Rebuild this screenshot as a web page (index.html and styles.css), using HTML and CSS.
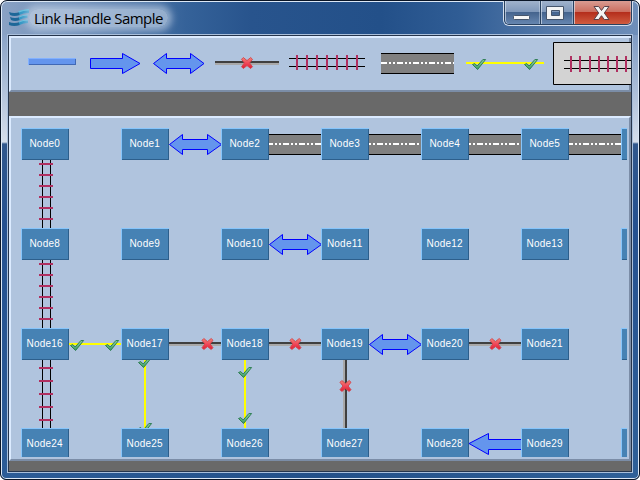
FILE: index.html
```
<!DOCTYPE html>
<html lang="en">
<head>
<meta charset="utf-8">
<title>Link Handle Sample</title>
<link rel="stylesheet" href="styles.css">
</head>
<body>
<svg class="defs" width="0" height="0" aria-hidden="true">
  <defs>
    <linearGradient id="green" x1="0" y1="0" x2="0" y2="1"><stop offset="0" stop-color="#8fd0a0"/><stop offset="1" stop-color="#3b9a66"/></linearGradient>
    <linearGradient id="red" x1="0" y1="0" x2="0" y2="1"><stop offset="0" stop-color="#ee8878"/><stop offset=".5" stop-color="#f0485a"/><stop offset="1" stop-color="#dd1c30"/></linearGradient>
    <symbol id="check" viewBox="0 0 14 11" overflow="visible"><path d="M.5 5.500 2.800 4.600 5.200 7 10.800.6 13.600.5 5.600 10.500Z" fill="url(#green)" stroke="#23764a" stroke-width=".9"/></symbol>
    <symbol id="cross" viewBox="0 0 12 12" overflow="visible"><path d="M2.300.5 6 3.600 9.700.5 11.500 2.300 8.600 6 11.500 9.700 9.700 11.500 6 8.600 2.300 11.500.5 9.700 3.400 6 .5 2.300Z" fill="url(#red)" stroke="#d4424a" stroke-width=".9"/></symbol>
    <g id="double"><path d="M.5 10.500 13.500.5V5.500H38.500V.5L52.500 10.500 38.500 20.500V15.500H13.500V20.500Z"/></g>
    <g id="rails"><path class="ink" d="M42 160h1v68h-1zM50 160h1v68h-1z"/><path class="tie" d="M39 163h14v2H39zM39 174h14v2H39zM39 185h14v2H39zM39 196h14v2H39zM39 207h14v2H39zM39 218h14v2H39z"/></g>
    <g id="road"><path class="asphalt" d="M0 0h52v21H0z"/><path class="ink" d="M0 0h52v1H0zM0 20h52v1H0z"/></g>
    <g id="node"><path fill="#4682b4" d="M0 0h48v32H0z"/><path fill="#87c5fb" d="M0 0h48v1H1v31H0z"/><path fill="#2d5f8c" d="M48 1v31H1v-1h46V1z"/></g>
  </defs>
</svg>
<div class="window">
  <header class="titlebar">
    <svg class="logo" width="21" height="19" viewBox="0 0 21 19"><path fill="#1d6798" d="M0 3q5 2 11 0v3Q5 8 1 6zM1 8q5 2 10 0v3q-5 2-9 0zM0 13q5 2 11 0v3Q5 18 0 16z"/><path fill="#2f96c5" d="M10 3q4-2.500 10-2v3q-6 0-9.500 2zM10 8q4-2 8.500-2v3q-5 0-8.500 2zM10 13q4-2 9-2v3q-5 0-8.500 2z"/><path fill="#62bddb" d="M9 2.500Q13 .5 20 0v1.500q-6 0-10 2zM10 7.500q4-2 9-2v1q-5 0-9 2zM10 12.500q4-2 9-2v1q-5 0-9 2z"/></svg>
    <h1>Link Handle Sample</h1>
    <div class="buttons">
      <div class="btn min"><svg width="34" height="23"><rect x="8.500" y="14.500" width="16" height="4" rx="1" fill="#f6f6f6" stroke="#46556b"/></svg></div>
      <div class="btn max"><svg width="32" height="23"><path fill="#f4f4f4" fill-rule="evenodd" stroke="#46556b" d="M5.500 5.500h17v13h-17zM10.500 9.500v5h8v-5z"/></svg></div>
      <div class="btn close"><svg width="58" height="23"><path d="M20 5.500h4.700l2.800 4 2.800-4H35l-4.700 6.500 4.700 6.500h-4.700l-2.800-3.800-2.800 3.800H20l4.700-6.500z" fill="#f4f4f4" stroke="#59434b"/></svg></div>
    </div>
  </header>
  <main class="client">
    <section class="panel palette">
      <svg width="622" height="56" viewBox="9 36 622 56">
        <path fill="#6495ed" d="M28 58h48v7H28z"/><path fill="#82b1ff" d="M28 58h48v1H29v6h-1z"/><path fill="#4169b5" d="M76 59v6H29v-1h46v-5z"/>
        <path class="arrow" d="M90.500 58.500h32v-5l17.500 10-17.500 10v-5h-32z"/>
        <path class="arrow" d="M153.500 63.500l13-10v5h24v-5l13.500 10-13.500 10v-5h-24v5z"/>
        <path class="dark" d="M215 61h64v2h-64z"/><path class="light" d="M215 63h64v2h-64z"/><use href="#cross" x="241" y="57" width="12" height="12"/>
        <path class="ink" d="M289 58h76v1h-76zM289 66h76v1h-76z"/>
        <path class="tie" d="M296 55h2v15h-2zM306 55h2v15h-2zM316 55h2v15h-2zM326 55h2v15h-2zM336 55h2v15h-2zM346 55h2v15h-2zM356 55h2v15h-2z"/>
        <path class="asphalt" d="M381 53h73v21h-73z"/><path class="ink" d="M381 53h73v1h-73zM381 73h73v1h-73z"/><path class="lane" d="M381 63h73"/>
        <path class="yellow" d="M466 62h78v2h-78z"/><use href="#check" x="472" y="59" width="14" height="11"/><use href="#check" x="524" y="59" width="14" height="11"/>
        <path fill="#7b8da7" d="M629 37h2v55h-2z"/>
        <path fill="#d3d3d3" stroke="#000" d="M553.500 42.500h90v42h-90z"/>
        <path class="ink" d="M564 60h70v1h-70zM564 68h70v1h-70z"/>
        <path class="tie" d="M570 56h2v16h-2zM579 56h2v16h-2zM589 56h2v16h-2zM598 56h2v16h-2zM607 56h2v16h-2zM616 56h2v16h-2zM625 56h2v16h-2z"/>
      </svg>
    </section>
    <section class="panel diagram">
      <svg width="616" height="339" viewBox="11 118 616 339">
        <use href="#rails"/><use href="#rails" y="100"/>
        <path class="ink" d="M42 360h1v68h-1zM50 360h1v68h-1z"/><path class="tie" d="M39 367h14v2H39zM39 380h14v2H39zM39 393h14v2H39zM39 406h14v2H39zM39 419h14v2H39z"/>
        <use href="#road" x="269" y="134"/><use href="#road" x="369" y="134"/><use href="#road" x="469" y="134"/><use href="#road" x="569" y="134"/>
        <path class="lane" d="M267 144h54"/><path class="lane" d="M361 144h60"/><path class="lane" d="M461 144h60"/><path class="lane" d="M567 144h54"/>
        <use class="arrow" href="#double" x="169" y="134"/><use class="arrow" href="#double" x="269" y="234"/><use class="arrow" href="#double" x="369" y="334"/>
        <path class="arrow" d="M469 443.500l19.500-10v6h40v10h-40v5z"/>
        <path class="dark" d="M169 342h52v2h-52zM269 342h52v2h-52zM469 342h52v2h-52zM345 360h2v68h-2z"/>
        <path class="light" d="M169 344h52v2h-52zM269 344h52v2h-52zM469 344h52v2h-52zM343 360h2v68h-2z"/>
        <path class="yellow" d="M69 343h52v2H69zM144 360h2v68h-2zM244 360h2v68h-2z"/>
        <g><use href="#cross" x="201.500" y="338" width="12" height="12"/><use href="#cross" x="289.500" y="338" width="12" height="12"/><use href="#cross" x="489.500" y="338" width="12" height="12"/><use href="#cross" x="339.500" y="380" width="12" height="12"/></g>
        <g><use href="#check" x="70" y="340" width="14" height="11"/><use href="#check" x="105" y="340" width="14" height="11"/><use href="#check" x="138" y="357" width="14" height="11"/><use href="#check" x="138" y="423" width="14" height="11"/><use href="#check" x="238" y="367" width="14" height="11"/><use href="#check" x="238" y="413" width="14" height="11"/></g>
        <g id="nodes"></g>
      </svg>
    </section>
  </main>
</div>
<script src="nodes.js"></script>
</body>
</html>
```

FILE: nodes.js
```
const layer = document.getElementById('nodes');
const ns = 'http://www.w3.org/2000/svg';
const columns = 8;
for (let i = 0; i < 32; i++) {
  const col = i % columns;
  if (col > 6) continue;
  const x = 21 + 100 * col;
  const y = 128 + 100 * Math.floor(i / columns);
  const box = document.createElementNS(ns, 'use');
  box.setAttribute('href', '#node');
  box.setAttribute('x', x);
  box.setAttribute('y', y);
  layer.append(box);
  if (col === 6) continue;
  const label = document.createElementNS(ns, 'text');
  label.setAttribute('x', x + 23.7);
  label.setAttribute('y', y + 19);
  label.textContent = 'Node' + i;
  layer.append(label);
}
```

FILE: styles.css
```
* { box-sizing: border-box; }
body { margin: 0; width: 640px; height: 480px; overflow: hidden; background: #fff; }
svg { display: block; }
.defs { position: absolute; }
.window {
  width: 640px; height: 480px; display: flex; flex-direction: column;
  padding: 0 6px 6px; border: 1px solid #0a1526; border-radius: 7px 7px 6px 6px;
  box-shadow: inset 0 0 0 1px #dce8f6;
  background:
    linear-gradient(#8aa3c7 0, #d5deeb 107px, #31588d 109px, #255190 190px, #2c5c97 440px) 0 34px / 7px 100% no-repeat,
    linear-gradient(#7f9bc3 0, #d5deeb 107px, #31588d 109px, #255190 190px, #2f6098 440px) 100% 34px / 8px 100% no-repeat,
    linear-gradient(90deg, #8aa2c4 0, #6f8fb9 70px, #356299 185px, #28548d 250px, #235089 380px, #305d95 460px, #5479a9 550px, #6f8fba 100%) 0 0 / 100% 40px no-repeat,
    linear-gradient(90deg, #2c5c97, #235089 50%, #2f6098);
}
.titlebar { height: 34px; flex: none; display: flex; align-items: flex-start; }
.logo { margin: 8px 5px 0 2px; flex: none; }
h1 {
  margin: 8px 0 0 -6px; padding: 0 5px; height: 18px; border-radius: 9px;
  font: 15px/18px "Open Sans", "Noto Sans", sans-serif; letter-spacing: -.52px; color: #000; white-space: nowrap;
  background: rgba(205,218,235,.6); box-shadow: 0 0 7px 4px rgba(205,218,235,.6);
}
.buttons {
  display: flex; margin: 0 0 0 auto; height: 25px; border: 1px solid #d3deed; border-top: 0;
  border-radius: 0 0 6px 6px; overflow: hidden;
}
.btn { height: 24px; border: 1px solid #29415f; border-top: 0; border-right: 0; background: linear-gradient(#a0b2cc, #7e97b9 48%, #45648e 50%, #6686b0); box-shadow: inset 1px 0 rgba(220,230,243,.65), inset -1px 0 rgba(220,230,243,.4); }
.min { width: 36px; border-radius: 0 0 0 5px; }
.max { width: 33px; }
.close { width: 59px; border-radius: 0 0 5px 0; border-right: 1px solid #29415f; background: linear-gradient(#d99c92, #cb6d5e 48%, #b52e1c 50%, #d05c40); }
.client {
  width: 624px; height: 437px; margin-left: 1px; flex: none; display: flex; flex-direction: column; gap: 24px;
  background: #696969; border: 1px solid #26354c; box-shadow: 0 0 0 1px #a9bfdb;
}
.panel { flex: none; background: #b0c4de; border: 2px solid #dcebff; border-right-color: #7b8da7; border-bottom-color: #7b8da7; }
.palette { height: 56px; overflow: hidden; border-right: 0; }
.palette svg { margin: -2px; }
.diagram { height: 345px; }
.ink { fill: #000; }
.tie { fill: #b03060; }
.asphalt { fill: #808080; }
.lane { fill: none; stroke: #fff; stroke-width: 2; stroke-dasharray: 6 2 2 2 2 2; }
.arrow { fill: #6495ed; stroke: #00f; }
.dark { fill: #404040; }
.light { fill: #a9a9a9; }
.yellow { fill: #ff0; }
text { font-family: "Liberation Sans", Arial, sans-serif; font-size: 10px; letter-spacing: .22px; fill: #fff; text-anchor: middle; }
```
